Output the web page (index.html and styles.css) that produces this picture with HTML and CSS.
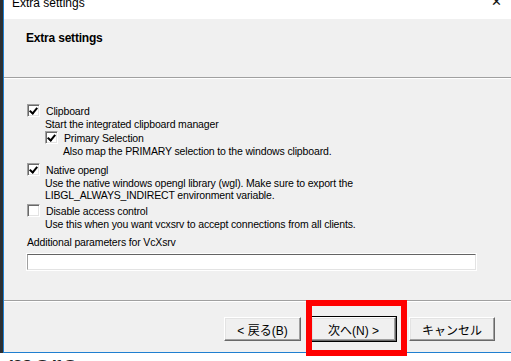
FILE: index.html
```html
<!DOCTYPE html>
<html>
<head>
    <meta charset="utf-8" />
    <title>Extra settings</title>
    <link rel="stylesheet" href="styles.css">
</head>
<body>
<div class="desk">
    <div class="strip"></div>
    <div class="win">
        <div class="titlebar">
            <span class="title">Extra settings</span>
            <span class="close">&#x2715;</span>
        </div>
        <div class="head">
            <p class="head-title">Extra settings</p>
        </div>
        <div class="content">
            <div class="opt">
                <div class="row"><span class="cb on"></span><span>Clipboard</span></div>
                <p class="desc">Start the integrated clipboard manager</p>
                <div class="sub">
                    <div class="row"><span class="cb on"></span><span>Primary Selection</span></div>
                    <p class="desc">Also map the PRIMARY selection to the windows clipboard.</p>
                </div>
            </div>
            <div class="opt opt2">
                <div class="row"><span class="cb on"></span><span>Native opengl</span></div>
                <p class="desc">Use the native windows opengl library (wgl). Make sure to export the<br />LIBGL_ALWAYS_INDIRECT environment variable.</p>
            </div>
            <div class="opt opt3">
                <div class="row"><span class="cb"></span><span>Disable access control</span></div>
                <p class="desc">Use this when you want vcxsrv to accept connections from all clients.</p>
            </div>
            <p class="label">Additional parameters for VcXsrv</p>
            <div class="field"></div>
        </div>
        <div class="foot">
            <span class="btn">&lt; 戻る(B)</span>
            <span class="btn def">次へ(N) &gt;<span class="mark"></span></span>
            <span class="btn cancel">キャンセル</span>
        </div>
    </div>
</div>
<div class="under"><span>mere.</span></div>
</body>
</html>
```
FILE: styles.css
```css
/*清除默认样式*/
body,div,p{padding:0; margin:0;}
body{background:#fff; font-family:"Liberation Sans", "Noto Sans CJK JP", sans-serif; color:#000; overflow:hidden;}

.desk{display:flex; height:353px;}
.strip{width:3px; background:#2b2f33;}
.win{flex:1; display:flex; flex-direction:column; border-left:1px solid #1f7fd0; border-bottom:1px solid #1f7fd0; background:#f0f0f0;}

/*标题栏*/
.titlebar{height:19px; background:#fff; display:flex; justify-content:space-between; overflow:hidden;}
.title{font-size:12px; line-height:12px; margin-top:-3px; margin-left:8px; color:#000;}
.close{font-size:13px; line-height:13px; margin-top:-5px; margin-right:9px; color:#111;}

.head{height:58px; border-bottom:1px solid #a0a0a0; box-shadow:0 1px 0 #fff;}
.head-title{font-size:12px; font-weight:bold; line-height:14px; padding:12px 0 0 22px; letter-spacing:-0.2px;}

/*内容*/
.content{height:221px; padding:25px 0 0 23px; box-sizing:border-box; font-size:10.5px; letter-spacing:-0.15px; margin-top:1px;}
.row{display:flex; align-items:center; height:13px; gap:6px; margin-bottom:1px;}
.desc{line-height:12px; padding-left:18px; margin-bottom:1px;}
.sub{padding-left:18px;}
.opt2{margin-top:6px;}
.opt3{margin-top:3px;}
.label{margin-top:6px; line-height:12px;}
.field{width:447px; height:14px; margin-top:6px; background:#fff; border:1px solid; border-color:#646464 #e3e3e3 #e3e3e3 #a0a0a0; box-shadow:0 0 0 1px #fff;}

.cb{width:11px; height:11px; background:#fff; border:1px solid; border-color:#a0a0a0 #fff #fff #a0a0a0; box-shadow:inset 1px 1px 0 #696969, inset -1px -1px 0 #e3e3e3; position:relative; flex:none;}
.cb.on:after{content:""; position:absolute; left:3px; top:1px; width:3px; height:6px; border:solid #000; border-width:0 2px 2px 0; transform:rotate(40deg);}

/*底部按钮*/
.foot{flex:1; border-top:1px solid #a0a0a0; box-shadow:inset 0 1px 0 #fff; display:flex; align-items:flex-start; padding:16px 0 0 220px; gap:10px; font-size:12px;}
.btn{width:77px; height:24px; box-sizing:border-box; flex:none; display:flex; align-items:center; justify-content:center; background:#f0f0f0; border:1px solid; border-color:#fff #696969 #696969 #fff; box-shadow:inset -1px -1px 0 #a0a0a0, inset 1px 1px 0 #e3e3e3; position:relative;}
.btn.def{width:85px; outline:1px solid #000;}
.btn.cancel{width:86px; margin-left:3px;}
.mark{position:absolute; left:-6px; top:-18px; width:89px; height:44px; border:6px solid #f00;}

.under{height:8px; overflow:hidden; font-size:31px; line-height:31px; padding-left:8px; color:#222;}
.under span{display:block; margin-top:-2px;}
```
